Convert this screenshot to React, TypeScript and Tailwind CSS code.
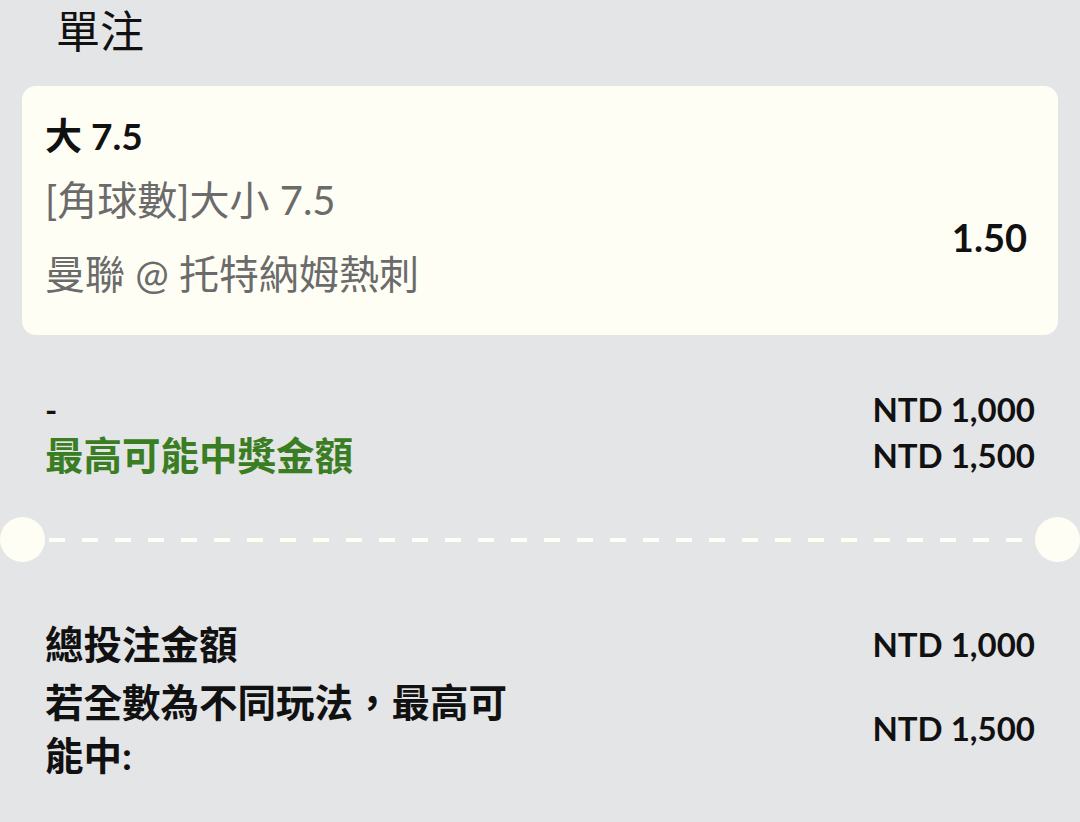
import React from 'react';

const font = "font-['Lato','Noto_Sans_CJK_TC',sans-serif]";

const Amount: React.FC<{ value: string }> = ({ value }) => (
  <span className="text-[33px] font-bold text-[#111] whitespace-nowrap">{value}</span>
);

export default function App() {
  return (
    <div className={`min-h-screen bg-[#e4e5e7] text-[#111] ${font}`}>
      <div className="pl-[56px] pt-[9px] text-[44px] leading-[44px]">單注</div>

      {/* selection card */}
      <div className="mx-[22px] mt-[33px] h-[249px] rounded-[14px] bg-[#fffef5] pl-[23px] pr-[31px] pt-[28px]">
        <div className="text-[37px] font-bold leading-[44px]">大 7.5</div>
        <div className="mt-[17px] flex items-center justify-between">
          <div className="text-[40px] leading-[50px] text-[#6b6b6b]">
            <div>[角球數]大小 7.5</div>
            <div className="mt-[24px]">曼聯 @ 托特納姆熱刺</div>
          </div>
          <span className="text-[38px] font-bold">1.50</span>
        </div>
      </div>

      {/* stake / potential win */}
      <div className="mt-[52px] pl-[45px] pr-[45px]">
        <div className="flex h-[46px] items-center justify-between">
          <span className="text-[33px] font-bold">-</span>
          <Amount value="NTD 1,000" />
        </div>
        <div className="flex h-[46px] items-center justify-between">
          <span className="text-[38.5px] font-bold text-[#3a7d23]">最高可能中獎金額</span>
          <Amount value="NTD 1,500" />
        </div>
      </div>

      {/* ticket tear line */}
      <div className="mt-[38px] flex h-[45px] items-center">
        <div className="h-[45px] w-[45px] shrink-0 rounded-full bg-[#fffef5]" />
        <div className="mx-[4px] h-[4px] flex-1 bg-[repeating-linear-gradient(90deg,#fffef5_0_16px,transparent_16px_33px)]" />
        <div className="h-[45px] w-[45px] shrink-0 rounded-full bg-[#fffef5]" />
      </div>

      {/* totals */}
      <div className="mt-[60px] pl-[45px] pr-[45px]">
        <div className="flex h-[46px] items-center justify-between">
          <span className="text-[38.5px] font-bold">總投注金額</span>
          <Amount value="NTD 1,000" />
        </div>
        <div className="mt-[8px] flex items-center justify-between">
          <span className="w-[480px] text-[38.5px] font-bold leading-[53px]">若全數為不同玩法，最高可能中:</span>
          <Amount value="NTD 1,500" />
        </div>
      </div>
    </div>
  );
}
